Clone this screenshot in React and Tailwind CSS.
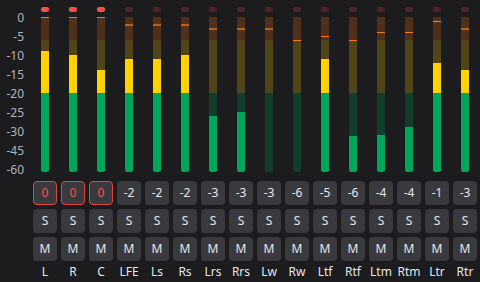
import React from "react";

const channels = [
    { name: "L", peak: 0, level: 34 },
    { name: "R", peak: 0, level: 38 },
    { name: "C", peak: 0, level: 53 },
    { name: "LFE", peak: -2, level: 42 },
    { name: "Ls", peak: -2, level: 42 },
    { name: "Rs", peak: -2, level: 38 },
    { name: "Lrs", peak: -3, level: 99 },
    { name: "Rrs", peak: -3, level: 95 },
    { name: "Lw", peak: -3, level: 155 },
    { name: "Rw", peak: -6, level: 155 },
    { name: "Ltf", peak: -5, level: 42 },
    { name: "Rtf", peak: -6, level: 119 },
    { name: "Ltm", peak: -4, level: 118 },
    { name: "Rtm", peak: -4, level: 110 },
    { name: "Ltr", peak: -1, level: 46 },
    { name: "Rtr", peak: -3, level: 53 },
];

// marker offset (px from bar top) and thickness per peak dB
const markers = {
    0: [0, 1],
    "-1": [4, 1],
    "-2": [7, 2],
    "-3": [11, 2],
    "-4": [15, 1],
    "-5": [19, 1],
    "-6": [23, 1],
};

const zones = [
    { from: 0, to: 23, dim: "bg-[#50301a]", lit: "bg-[#ff6a1a]" },
    { from: 23, to: 76, dim: "bg-[#4f4519]", lit: "bg-[#ffd200]" },
    { from: 76, to: 155, dim: "bg-[#143c2c]", lit: "bg-[#00a65a]" },
];

const scale = ["0", "-5", "-10", "-15", "-20", "-25", "-30", "-45", "-60"];

function Meter({ level, peak }) {
    const [offset, thick] = markers[peak];
    const bright = thick === 1;

    return (
        <div className="relative w-2 h-[155px] flex flex-col rounded-b-[2px] overflow-hidden">
            {zones.map((z, i) => {
                const lit = Math.max(0, z.to - Math.max(z.from, level));
                const dim = z.to - z.from - lit;
                return (
                    <div key={i} className="flex flex-col">
                        <div className={z.dim} style={{ height: dim }} />
                        <div className={z.lit} style={{ height: lit }} />
                    </div>
                );
            })}
            <div
                className={`absolute left-0 right-0 ${bright ? "bg-[#ff7a14]" : "bg-[#b8601c]"}`}
                style={{ top: offset, height: thick }}
            />
        </div>
    );
}

export default function App() {
    return (
        <div
            className="w-[480px] h-[282px] bg-[#1c1c1e] flex overflow-hidden"
            style={{ fontFamily: '"Noto Sans", "Open Sans", sans-serif' }}
        >
            {/* dB scale */}
            <div className="w-[31px] pt-[8px] pr-[7px] flex flex-col items-end text-[12px] leading-[19px] text-[#aeb2ba]">
                {scale.map((s) => (
                    <div key={s}>{s}</div>
                ))}
            </div>

            {channels.map((ch) => {
                const clip = ch.peak === 0;
                return (
                    <div key={ch.name} className="w-7 flex flex-col items-center pt-[7px]">
                        <div className={`w-2 h-[5px] rounded-[2px] ${clip ? "bg-[#ff4d4d]" : "bg-[#4a2428]"}`} />
                        <div className="mt-[5px]">
                            <Meter level={ch.level} peak={ch.peak} />
                        </div>

                        <div className="mt-[9px] flex flex-col gap-1 text-[12px]">
                            <div
                                className={`w-6 h-6 rounded flex items-center justify-center bg-[#3a3a3e] ${
                                    clip ? "border border-[#e0463c] text-[#ff4d3d]" : "text-[#e4e6ea]"
                                }`}
                            >
                                {ch.peak}
                            </div>
                            <div className="w-6 h-6 rounded flex items-center justify-center bg-[#3a3a3e] text-[#e4e6ea]">
                                S
                            </div>
                            <div className="w-6 h-6 rounded flex items-center justify-center bg-[#3a3a3e] text-[#e4e6ea]">
                                M
                            </div>
                        </div>

                        <div className="mt-[2px] text-[12px] leading-[18px] text-[#e4e6ea]">{ch.name}</div>
                    </div>
                );
            })}
        </div>
    );
}
